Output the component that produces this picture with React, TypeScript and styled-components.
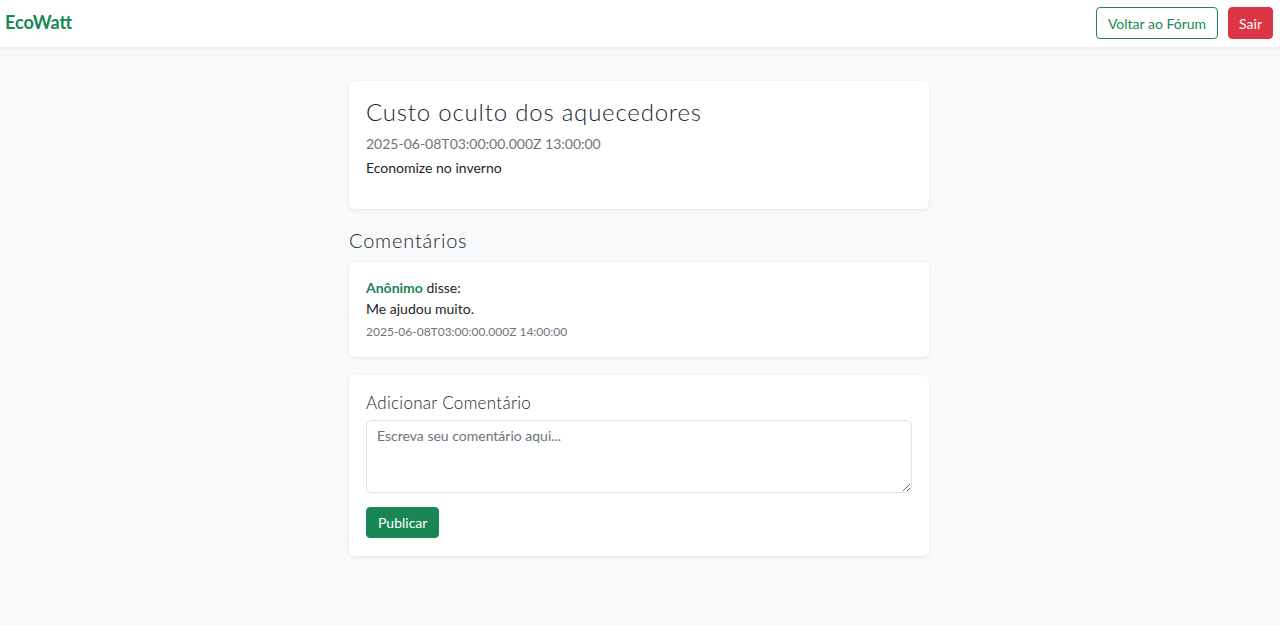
import React from "react";
import styled, { createGlobalStyle } from "styled-components";

const Global = createGlobalStyle`
  * { box-sizing: border-box; }
  body {
    margin: 0;
    background: #f8f9fa;
    font-family: "Lato", "Open Sans", sans-serif;
    color: #212529;
  }
`;

const Navbar = styled.nav`
  height: 47px;
  background: #fff;
  box-shadow: 0 1px 4px rgba(0,0,0,0.08);
  display: flex;
  align-items: flex-start;
  justify-content: space-between;
  padding: 7px 7px 0 5px;
`;

const Brand = styled.div`
  color: #198754;
  font-weight: 700;
  font-size: 18px;
  line-height: 30px;
`;

const NavActions = styled.div`
  display: flex;
  gap: 10px;
  align-items: center;
`;

const Button = styled.button<{ $variant: "outline" | "danger" | "success"; $h?: number; $px?: number }>`
  font-family: inherit;
  font-size: 14px;
  height: ${p => p.$h ?? 32}px;
  padding: 0 ${p => p.$px ?? 10}px;
  border-radius: 4px;
  cursor: pointer;
  border: 1px solid ${p => (p.$variant === "danger" ? "#dc3545" : "#198754")};
  background: ${p =>
    p.$variant === "danger" ? "#dc3545" : p.$variant === "success" ? "#198754" : "#fff"};
  color: ${p => (p.$variant === "outline" ? "#198754" : "#fff")};
`;

const Main = styled.main`
  width: 580px;
  margin: 34px 0 0 calc(50% - 291px);
  display: flex;
  flex-direction: column;
`;

const Card = styled.section<{ $mb?: number; $pad: string }>`
  background: #fff;
  border-radius: 6px;
  box-shadow: 0 1px 4px rgba(0,0,0,0.08);
  padding: ${p => p.$pad};
  margin-bottom: ${p => p.$mb ?? 16}px;
`;

const Title = styled.h1`
  margin: 0 0 6px;
  font-size: 24px;
  font-weight: 300;
  line-height: 30px;
  letter-spacing: 0.8px;
`;

const Meta = styled.div<{ $size: number; $mt: number }>`
  font-size: ${p => p.$size}px;
  color: #6c757d;
  line-height: 1.5;
  margin-top: ${p => p.$mt}px;
`;

const Text = styled.p<{ $mt?: number }>`
  margin: ${p => p.$mt ?? 0}px 0 0;
  font-size: 14px;
  line-height: 21px;
`;

const SectionTitle = styled.h2`
  margin: 0 0 10px;
  font-size: 20px;
  font-weight: 300;
  line-height: 24px;
  letter-spacing: 0.8px;
`;

const Author = styled.strong`
  color: #198754;
  font-weight: 700;
`;

const FormTitle = styled.h3`
  margin: 0 0 6px;
  font-size: 17px;
  font-weight: 300;
  line-height: 22px;
  letter-spacing: 0.3px;
`;

const TextArea = styled.textarea`
  width: 100%;
  height: 73px;
  display: block;
  border: 1px solid #dee2e6;
  border-radius: 6px;
  padding: 6px 10px;
  font-family: inherit;
  font-size: 14px;
  color: #212529;
  margin-bottom: 14px;
  &::placeholder { color: #6c757d; }
`;

export default function App() {
  return (
    <>
      <Global />
      <Navbar>
        <Brand>EcoWatt</Brand>
        <NavActions>
          <Button $variant="outline" $px={11}>Voltar ao Fórum</Button>
          <Button $variant="danger">Sair</Button>
        </NavActions>
      </Navbar>
      <Main>
        <Card $mb={19} $pad="16px 17px 31px">
          <Title>Custo oculto dos aquecedores</Title>
          <Meta $size={14} $mt={0}>2025-06-08T03:00:00.000Z 13:00:00</Meta>
          <Text $mt={3}>Economize no inverno</Text>
        </Card>
        <SectionTitle>Comentários</SectionTitle>
        <Card $mb={18} $pad="15px 17px 16px">
          <Text>
            <Author>Anônimo</Author> disse:
          </Text>
          <Text>Me ajudou muito.</Text>
          <Meta $size={12} $mt={4}>2025-06-08T03:00:00.000Z 14:00:00</Meta>
        </Card>
        <Card $pad="17px 17px 18px">
          <FormTitle>Adicionar Comentário</FormTitle>
          <TextArea placeholder="Escreva seu comentário aqui..." />
          <Button $variant="success" $h={31} $px={11}>Publicar</Button>
        </Card>
      </Main>
    </>
  );
}
